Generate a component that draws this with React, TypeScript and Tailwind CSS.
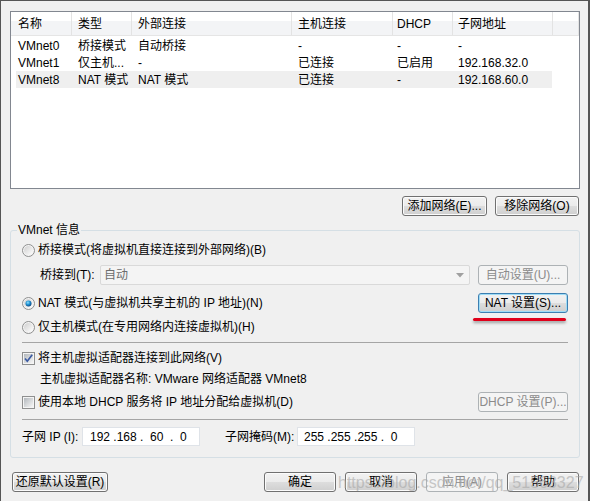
import type { ReactNode } from 'react';

const cols = [
  { label: '名称', w: 'w-[61px]', pl: 'pl-[7px]' },
  { label: '类型', w: 'w-[60px]', pl: 'pl-[6px]' },
  { label: '外部连接', w: 'w-[160px]', pl: 'pl-[6px]' },
  { label: '主机连接', w: 'w-[101px]', pl: 'pl-[6px]' },
  { label: 'DHCP', w: 'w-[60px]', pl: 'pl-[4px]' },
  { label: '子网地址', w: 'w-[100px]', pl: 'pl-[5px]' },
];

const cellCls = [
  'w-[55px] pl-[2px]',
  'w-[60px] pl-[7px]',
  'w-[160px] pl-[7px]',
  'w-[101px] pl-[7px]',
  'w-[60px] pl-[5px]',
  'w-[100px] pl-[6px]',
];

const rows = [
  ['VMnet0', '桥接模式', '自动桥接', '-', '-', '-'],
  ['VMnet1', '仅主机...', '-', '已连接', '已启用', '192.168.32.0'],
  ['VMnet8', 'NAT 模式', 'NAT 模式', '已连接', '-', '192.168.60.0'],
];

function Btn({
  children,
  className = '',
  disabled = false,
  focused = false,
}: {
  children: ReactNode;
  className?: string;
  disabled?: boolean;
  focused?: boolean;
}) {
  if (disabled) {
    return (
      <div
        className={`flex h-[20px] items-center justify-center rounded-[3px] border border-[#adb2b5] bg-[#f4f4f4] text-[#8b8b8b] ${className}`}
      >
        {children}
      </div>
    );
  }
  return (
    <div
      className={`flex h-[20px] items-center justify-center rounded-[3px] border bg-[linear-gradient(to_bottom,#f2f2f2_0%,#ebebeb_50%,#dddddd_51%,#cfcfcf_100%)] text-black ${
        focused
          ? 'border-[#3c7fb1] shadow-[inset_0_0_0_1px_#9fdcf6]'
          : 'border-[#707070] shadow-[inset_0_0_0_1px_#fbfbfb]'
      } ${className}`}
    >
      {children}
    </div>
  );
}

function Radio({ checked = false }: { checked?: boolean }) {
  return (
    <svg width="13" height="13" viewBox="0 0 13 13" className="shrink-0">
      <defs>
        <linearGradient id="rbg" x1="0" y1="0" x2="1" y2="1">
          <stop offset="0" stopColor="#cfcfcf" />
          <stop offset="1" stopColor="#ffffff" />
        </linearGradient>
        <radialGradient id="rdot" cx="0.4" cy="0.35" r="0.7">
          <stop offset="0" stopColor="#8fe0ff" />
          <stop offset="0.5" stopColor="#1c8fd0" />
          <stop offset="1" stopColor="#0c3e78" />
        </radialGradient>
      </defs>
      <circle cx="6.5" cy="6.5" r="6" fill="#f4f4f4" stroke="#8e8f8f" />
      <circle cx="6.5" cy="6.5" r="4.5" fill="url(#rbg)" />
      {checked && <circle cx="6.5" cy="6.5" r="3" fill="url(#rdot)" />}
    </svg>
  );
}

function Check({ checked = false }: { checked?: boolean }) {
  return (
    <svg width="13" height="13" viewBox="0 0 13 13" className="shrink-0">
      <defs>
        <linearGradient id="cbg" x1="0" y1="0" x2="1" y2="1">
          <stop offset="0" stopColor="#b3b8bd" />
          <stop offset="1" stopColor="#f6f6f6" />
        </linearGradient>
      </defs>
      <rect x="0.5" y="0.5" width="12" height="12" fill="#f4f4f4" stroke="#8e8f8f" />
      <rect x="2" y="2" width="9" height="9" fill="url(#cbg)" />
      {checked && (
        <path d="M3 6.5 L5.3 9.2 L10.2 2.8" fill="none" stroke="#3b5aa2" strokeWidth="1.7" />
      )}
    </svg>
  );
}

export default function App() {
  return (
    <div className="relative h-[501px] w-[590px] overflow-hidden border-l border-r-2 border-t border-[#555] bg-[#f0f0f0] pl-[9px] pr-[8px] pt-[10px] font-['Liberation_Sans','Noto_Sans_CJK_SC',sans-serif] text-[12px] leading-[16px] text-black">
      {/* network list */}
      <div className="h-[178px] border border-[#828790] bg-white">
        <div className="flex h-[24px] border-b border-[#e5e5e5] bg-[linear-gradient(to_bottom,#ffffff_0%,#ffffff_40%,#f3f4f6_41%,#f3f4f6_100%)]">
          {cols.map((c) => (
            <div key={c.label} className={`flex items-center border-r border-[#e3e3e3] ${c.w} ${c.pl}`}>
              {c.label}
            </div>
          ))}
          <div className="w-[26px] border-r border-[#e3e3e3]" />
        </div>
        <div className="mt-px">
          {rows.map((r, i) => (
            <div
              key={r[0]}
              className={`ml-[5px] flex h-[17px] w-[536px] items-center ${i === 2 ? 'bg-[#efefef]' : ''}`}
            >
              {r.map((v, j) => (
                <div key={j} className={`whitespace-nowrap ${cellCls[j]}`}>
                  {v}
                </div>
              ))}
            </div>
          ))}
        </div>
      </div>

      <div className="mr-px mt-[7px] flex justify-end gap-[8px]">
        <Btn className="w-[85px]">添加网络(E)...</Btn>
        <Btn className="w-[84px]">移除网络(O)</Btn>
      </div>

      {/* VMnet info */}
      <fieldset className="mt-[6px] rounded-[3px] border border-[#d5dfe5]">
        <legend className="ml-[6px] h-[16px] px-[1px] leading-[16px]">VMnet 信息</legend>
        <div className="pb-[11px] pl-[11px] pr-[11px]">
          <div className="mt-[4px] flex h-[16px] items-center gap-[3px]">
            <Radio />
            <span>桥接模式(将虚拟机直接连接到外部网络)(B)</span>
          </div>

          <div className="mt-[7px] flex h-[20px] items-center pl-[18px]">
            <span className="w-[60px]">桥接到(T):</span>
            <div className="flex h-[20px] flex-1 items-center justify-between rounded-[2px] border border-[#d9d9d9] bg-[#f4f4f4] pl-[3px] pr-[5px] text-[#6d6d6d]">
              <span>自动</span>
              <svg width="8" height="5" viewBox="0 0 8 5">
                <path d="M0 0 H8 L4 4.5 Z" fill="#a0a0a0" />
              </svg>
            </div>
            <Btn disabled className="ml-[8px] w-[90px]">
              自动设置(U)...
            </Btn>
          </div>

          <div className="mt-[8px] flex h-[20px] items-center gap-[3px]">
            <Radio checked />
            <span>NAT 模式(与虚拟机共享主机的 IP 地址)(N)</span>
            <div className="relative ml-auto">
              <Btn focused className="w-[90px]">
                NAT 设置(S)...
              </Btn>
              <div className="absolute left-[-5px] top-[25px] h-[3px] w-[93px] rounded-full bg-[#e0001a] shadow-[0_2px_3px_rgba(0,0,0,0.35)]" />
            </div>
          </div>

          <div className="mt-[6px] flex h-[16px] items-center gap-[3px]">
            <Radio />
            <span>仅主机模式(在专用网络内连接虚拟机)(H)</span>
          </div>

          <div className="mt-[7px] h-px bg-[#a5a5a5]" />

          <div className="mt-[7px] flex h-[16px] items-center gap-[3px]">
            <Check checked />
            <span>将主机虚拟适配器连接到此网络(V)</span>
          </div>

          <div className="mt-[5px] flex h-[16px] items-center pl-[18px]">
            主机虚拟适配器名称: VMware 网络适配器 VMnet8
          </div>

          <div className="mt-[5px] flex h-[20px] items-center gap-[3px]">
            <Check />
            <span>使用本地 DHCP 服务将 IP 地址分配给虚拟机(D)</span>
            <Btn disabled className="ml-auto w-[90px]">
              DHCP 设置(P)...
            </Btn>
          </div>

          <div className="mt-[7px] h-px bg-[#a5a5a5]" />

          <div className="mt-[7px] flex h-[19px] items-center">
            <span className="w-[60px]">子网 IP (I):</span>
            <div className="flex h-[19px] w-[118px] items-center whitespace-pre border border-[#dfe3e8] bg-white pl-[7px]">
              192 .168 .  60  .  0
            </div>
            <span className="ml-[25px] w-[72px]">子网掩码(M):</span>
            <div className="flex h-[19px] w-[118px] items-center whitespace-pre border border-[#dfe3e8] bg-white pl-[6px]">
              255 .255 .255 .  0
            </div>
          </div>
        </div>
      </fieldset>

      {/* dialog buttons */}
      <div className="mr-px ml-[2px] mt-[14px] flex items-center justify-between">
        <Btn className="w-[96px]">还原默认设置(R)</Btn>
        <div className="flex gap-[9px]">
          <Btn className="w-[72px]">确定</Btn>
          <Btn className="w-[72px]">取消</Btn>
          <Btn disabled className="w-[72px]">
            应用(A)
          </Btn>
          <Btn className="w-[72px]">帮助</Btn>
        </div>
      </div>

      <div className="pointer-events-none absolute left-[337px] top-[472px] whitespace-nowrap text-[16px] leading-[20px] text-[#a8a8a8] opacity-60">
        https://blog.csdn.net/qq_51563327
      </div>
    </div>
  );
}
